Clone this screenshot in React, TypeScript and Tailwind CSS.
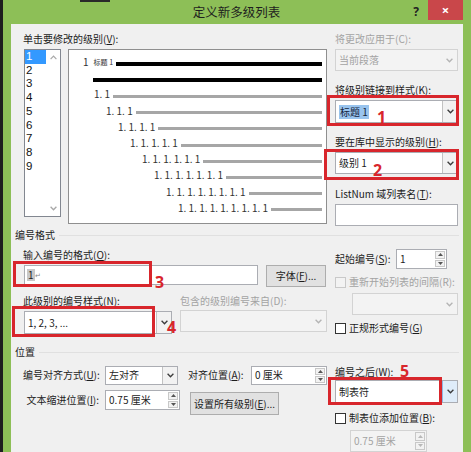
import React from "react";

function Chev({ color = "#3c3c3c" }: { color?: string }) {
  return (
    <svg width="7" height="5" viewBox="0 0 7 5">
      <path d="M0.6 0.8L3.5 3.8L6.4 0.8" fill="none" stroke={color} strokeWidth="1.3" />
    </svg>
  );
}

function ChevUp({ color = "#a8a8a8" }: { color?: string }) {
  return (
    <svg width="7" height="5" viewBox="0 0 7 5">
      <path d="M0.6 4.2L3.5 1.2L6.4 4.2" fill="none" stroke={color} strokeWidth="1.2" />
    </svg>
  );
}

function Tri({ up, color }: { up?: boolean; color: string }) {
  return (
    <svg width="5" height="3" viewBox="0 0 5 3">
      <path d={up ? "M0 3L2.5 0L5 3Z" : "M0 0L2.5 3L5 0Z"} fill={color} />
    </svg>
  );
}

function DisabledCombo({ text, className }: { text?: string; className: string }) {
  return (
    <div className={"flex border border-[#d3d3d3] bg-[#f3f3f3] text-[#a3a3a3] " + className}>
      <div className="flex-1 flex items-center pl-[3px] leading-none whitespace-nowrap">{text}</div>
      <div className="w-[15px] flex items-center justify-center">
        <Chev color="#b4b4b4" />
      </div>
    </div>
  );
}

function Combo({
  children,
  className,
  blue,
}: {
  children?: React.ReactNode;
  className: string;
  blue?: boolean;
}) {
  return (
    <div className={"flex border border-[#abadb3] bg-white " + className}>
      <div className="flex-1 flex items-center pl-[3px] leading-none whitespace-nowrap">{children}</div>
      <div
        className={
          "w-[15px] flex items-center justify-center border-l " +
          (blue ? "border-[#8fb8e3] bg-[#dfecf9]" : "border-[#c2c2c2] bg-[#f2f2f2]")
        }
      >
        <Chev />
      </div>
    </div>
  );
}

function Spin({ text, className, disabled }: { text: string; className: string; disabled?: boolean }) {
  return (
    <div
      className={
        "flex border " +
        (disabled ? "border-[#d3d3d3] bg-[#f3f3f3] text-[#a3a3a3] " : "border-[#abadb3] bg-white ") +
        className
      }
    >
      <div className="flex-1 flex items-center pl-[3px] leading-none whitespace-nowrap">{text}</div>
      <div className="w-[12px] flex flex-col gap-px p-px">
        <div className="flex-1 flex items-center justify-center border border-[#c8c8c8] bg-[#f2f2f2]">
          <Tri up color={disabled ? "#b8b8b8" : "#555"} />
        </div>
        <div className="flex-1 flex items-center justify-center border border-[#c8c8c8] bg-[#f2f2f2]">
          <Tri color={disabled ? "#b8b8b8" : "#555"} />
        </div>
      </div>
    </div>
  );
}

function Check({ label, disabled }: { label: React.ReactNode; disabled?: boolean }) {
  return (
    <div className="flex items-center h-[12px]">
      <div
        className={
          "w-[11px] h-[11px] border " +
          (disabled ? "border-[#c9c9c9] bg-[#f3f3f3]" : "border-[#333333] bg-white")
        }
      />
      <span className={"ml-[3px] leading-[12px] whitespace-nowrap " + (disabled ? "text-[#a3a3a3]" : "")}>
        {label}
      </span>
    </div>
  );
}

function Label({ children, disabled }: { children: React.ReactNode; disabled?: boolean }) {
  return (
    <div className={"h-[12px] leading-[12px] whitespace-nowrap " + (disabled ? "text-[#a3a3a3]" : "")}>
      {children}
    </div>
  );
}

function Digit({ children, className }: { children: React.ReactNode; className: string }) {
  return (
    <div
      className={
        "absolute font-['Noto_Sans',sans-serif] text-[16px] font-bold leading-none text-[#d8262c] " + className
      }
    >
      {children}
    </div>
  );
}

function GroupHeader({ children }: { children: React.ReactNode }) {
  return (
    <div className="h-[12px] pl-[4px] flex items-center">
      <span className="leading-[12px] whitespace-nowrap">{children}</span>
      <div className="flex-1 ml-[4px] mr-[4px] h-px bg-[#e0e0e0]" />
    </div>
  );
}

const levels = [
  "1. 1",
  "1. 1. 1",
  "1. 1. 1. 1",
  "1. 1. 1. 1. 1",
  "1. 1. 1. 1. 1. 1",
  "1. 1. 1. 1. 1. 1. 1",
  "1. 1. 1. 1. 1. 1. 1. 1",
  "1. 1. 1. 1. 1. 1. 1. 1. 1",
];
const indents = [
  "pl-[25px]",
  "pl-[37px]",
  "pl-[49px]",
  "pl-[61px]",
  "pl-[73px]",
  "pl-[85px]",
  "pl-[97px]",
  "pl-[109px]",
];

export default function App() {
  return (
    <div className="w-[471px] h-[452px] overflow-hidden flex bg-[#8dbf57] font-['Noto_Sans_CJK_SC','Noto_Sans',sans-serif] text-[10px] text-[#1c1c1c]">
      <div className="w-[3px] bg-[#1e1e1e]" />
      <div className="w-[468px] flex flex-col">
        {/* title bar */}
        <div className="h-[27px] grid grid-cols-[1fr_auto_1fr]">
          <div>
            <div className="ml-[77px] w-[30px] h-[2px] bg-[#2a2a2a]" />
          </div>
          <div className="flex items-center text-[12.5px] leading-none text-[#1e1e1e] pr-[1px]">定义新多级列表</div>
          <div className="flex justify-end items-start pr-[8px]">
            <div className="mt-[6px] mr-[9px] text-[12px] font-bold leading-none text-[#222] font-['Noto_Sans',sans-serif]">
              ?
            </div>
            <div className="w-[35px] h-[20px] bg-[#c9474a] flex items-center justify-center text-white text-[13px] font-bold leading-none font-['Noto_Sans',sans-serif]">
              ×
            </div>
          </div>
        </div>

        <div className="flex-1 flex">
          <div className="w-[8px]" />
          <div className="w-[452px] bg-[#f0f0f0] flex flex-col">
            {/* section 1 */}
            <div className="h-[205px] pt-[9px] pl-[12px] flex">
              <div className="w-[304px]">
                <Label>
                  单击要修改的级别(<u>V</u>):
                </Label>
                <div className="mt-[4px] flex items-start">
                  <div className="ml-[1px] w-[37px] h-[168px] border border-[#828790] bg-white flex">
                    <div className="w-[21px]">
                      {["1", "2", "3", "4", "5", "6", "7", "8", "9"].map((d, i) => (
                        <div
                          key={d}
                          className={
                            "h-[13.7px] flex items-center font-['Liberation_Sans',sans-serif] text-[11.5px] leading-none pl-[1px] " +
                            (i === 0 ? "bg-[#3399ff] text-white" : "text-[#111]")
                          }
                        >
                          {d}
                        </div>
                      ))}
                    </div>
                    <div className="flex-1 flex flex-col justify-between items-center py-[5px]">
                      <ChevUp />
                      <Chev color="#a8a8a8" />
                    </div>
                  </div>
                  <div className="ml-[7px] w-[259px] h-[175px] border border-[#8f8f8f] bg-white pt-[4px] pr-[4px] text-[#333]">
                    <div className="h-[16.2px] flex items-center pl-[14px]">
                      <span className="leading-none text-[10px]">1</span>
                      <span className="ml-[5px] leading-none text-[7px]">标题 1</span>
                      <div className="flex-1 ml-[3px] mt-[4px] h-[4px] bg-black" />
                    </div>
                    <div className="h-[16.2px] flex items-center pl-[24px]">
                      <div className="flex-1 mt-[4px] h-[4px] bg-black" />
                    </div>
                    {levels.map((t, i) => (
                      <div key={t} className={"h-[16.2px] flex items-center " + indents[i]}>
                        <span className="leading-none text-[10px] whitespace-pre">{t}</span>
                        <div className="flex-1 ml-[3px] mt-[4px] h-[3px] bg-[#a6a6a6]" />
                      </div>
                    ))}
                  </div>
                </div>
              </div>
              <div className="ml-[8px] w-[123px]">
                <Label disabled>将更改应用于(C):</Label>
                <DisabledCombo text="当前段落" className="mt-[4px] h-[22px]" />
                <div className="mt-[13px]">
                  <Label>
                    将级别链接到样式(<u>K</u>):
                  </Label>
                </div>
                <div className="relative mt-[4px]">
                  <Combo className="h-[23px]">
                    <span className="bg-[#99c4ee] text-[#14233b] px-[1px] py-[2px]">标题 1</span>
                  </Combo>
                  <div className="absolute left-[-8px] top-[-5px] w-[132px] h-[31px] border-[3px] border-[#d8262c]" />
                  <Digit className="left-[42px] top-[9px]">1</Digit>
                </div>
                <div className="mt-[13px]">
                  <Label>
                    要在库中显示的级别(<u>H</u>):
                  </Label>
                </div>
                <div className="relative mt-[4px]">
                  <Combo className="h-[22px]">级别 1</Combo>
                  <div className="absolute left-[-11px] top-[-3px] w-[135px] h-[31px] border-[3px] border-[#d8262c]" />
                  <Digit className="left-[38px] top-[10px]">2</Digit>
                </div>
                <div className="mt-[14px]">
                  <Label>
                    ListNum 域列表名(<u>T</u>):
                  </Label>
                </div>
                <div className="mt-[4px] h-[22px] border border-[#abadb3] bg-white" />
              </div>
            </div>

            {/* section 2 */}
            <div className="h-[117px]">
              <GroupHeader>编号格式</GroupHeader>
              <div className="flex pl-[12px]">
                <div className="w-[304px]">
                  <div className="mt-[8px]">
                    <Label>
                      输入编号的格式(<u>O</u>):
                    </Label>
                  </div>
                  <div className="mt-[4px] flex items-start">
                    <div className="relative ml-[1px] w-[234px] h-[20px] border border-[#abadb3] bg-white flex items-center pl-[2px]">
                      <span className="bg-[#c8c8c8] leading-none px-[1px] py-[1px]">1</span>
                      <span className="text-[7px] text-[#888] leading-none">↵</span>
                      <div className="absolute left-[-12px] top-[-5px] w-[139px] h-[26px] border-[3px] border-[#d8262c]" />
                      <Digit className="left-[130px] top-[8px]">3</Digit>
                    </div>
                    <div className="ml-[8px] w-[60px] h-[22px] border border-[#adadad] bg-[#e1e1e1] flex items-center justify-center leading-none">
                      字体(<u>F</u>)...
                    </div>
                  </div>
                  <div className="mt-[8px] flex">
                    <div className="w-[157px]">
                      <Label>
                        此级别的编号样式(<u>N</u>):
                      </Label>
                    </div>
                    <Label disabled>包含的级别编号来自(D):</Label>
                  </div>
                  <div className="mt-[3px] flex items-start">
                    <div className="relative ml-[1px] mt-[1px]">
                      <Combo className="w-[148px] h-[23px]">1, 2, 3, ...</Combo>
                      <div className="absolute left-[-12px] top-[-5px] w-[143px] h-[31px] border-[3px] border-[#d8262c]" />
                      <Digit className="left-[143px] top-[8px]">4</Digit>
                    </div>
                    <DisabledCombo className="ml-[8px] w-[147px] h-[22px]" />
                  </div>
                </div>
                <div className="ml-[8px] w-[123px]">
                  <div className="mt-[8px] flex items-center h-[20px]">
                    <div className="w-[61px] leading-[12px] whitespace-nowrap">
                      起始编号(<u>S</u>):
                    </div>
                    <Spin text="1" className="w-[51px] h-[20px]" />
                  </div>
                  <div className="mt-[7px]">
                    <Check disabled label="重新开始列表的间隔(R):" />
                  </div>
                  <DisabledCombo className="mt-[5px] ml-[17px] w-[106px] h-[22px]" />
                  <div className="mt-[7px]">
                    <Check
                      label={
                        <>
                          正规形式编号(<u>G</u>)
                        </>
                      }
                    />
                  </div>
                </div>
              </div>
            </div>

            {/* section 3 */}
            <div className="flex-1">
              <GroupHeader>位置</GroupHeader>
              <div className="flex pl-[12px]">
                <div className="w-[304px]">
                  <div className="mt-[7px] h-[20px] flex items-center">
                    <div className="w-[82px] pr-[6px] text-right leading-[12px] whitespace-nowrap">
                      编号对齐方式(<u>U</u>):
                    </div>
                    <Combo className="w-[73px] h-[19px]">左对齐</Combo>
                    <div className="ml-[10px] w-[63px] leading-[12px] whitespace-nowrap">
                      对齐位置(<u>A</u>):
                    </div>
                    <Spin text="0 厘米" className="w-[76px] h-[19px]" />
                  </div>
                  <div className="mt-[5px] flex items-start">
                    <div className="w-[82px] h-[20px] pr-[6px] flex items-center justify-end leading-[12px] whitespace-nowrap">
                      文本缩进位置(<u>I</u>):
                    </div>
                    <Spin text="0.75 厘米" className="w-[75px] h-[20px]" />
                    <div className="ml-[10px] mt-[2px] w-[89px] h-[23px] border border-[#adadad] bg-[#e1e1e1] flex items-center justify-center leading-none whitespace-nowrap">
                      设置所有级别(<u>E</u>)...
                    </div>
                  </div>
                </div>
                <div className="ml-[8px] w-[123px]">
                  <div className="mt-[8px]">
                    <Label>编号之后(W):</Label>
                  </div>
                  <div className="relative mt-[2px]">
                    <Combo blue className="w-[123px] h-[23px]">
                      制表符
                    </Combo>
                    <div className="absolute left-[-7px] top-[-3px] w-[114px] h-[28px] border-[3px] border-[#d8262c]" />
                    <Digit className="left-[65px] top-[-17px]">5</Digit>
                  </div>
                  <div className="mt-[9px]">
                    <Check
                      label={
                        <>
                          制表位添加位置(<u>B</u>):
                        </>
                      }
                    />
                  </div>
                  <Spin disabled text="0.75 厘米" className="mt-[6px] ml-[15px] w-[77px] h-[22px]" />
                </div>
              </div>
            </div>
          </div>
          <div className="w-[8px]" />
        </div>
      </div>
    </div>
  );
}
